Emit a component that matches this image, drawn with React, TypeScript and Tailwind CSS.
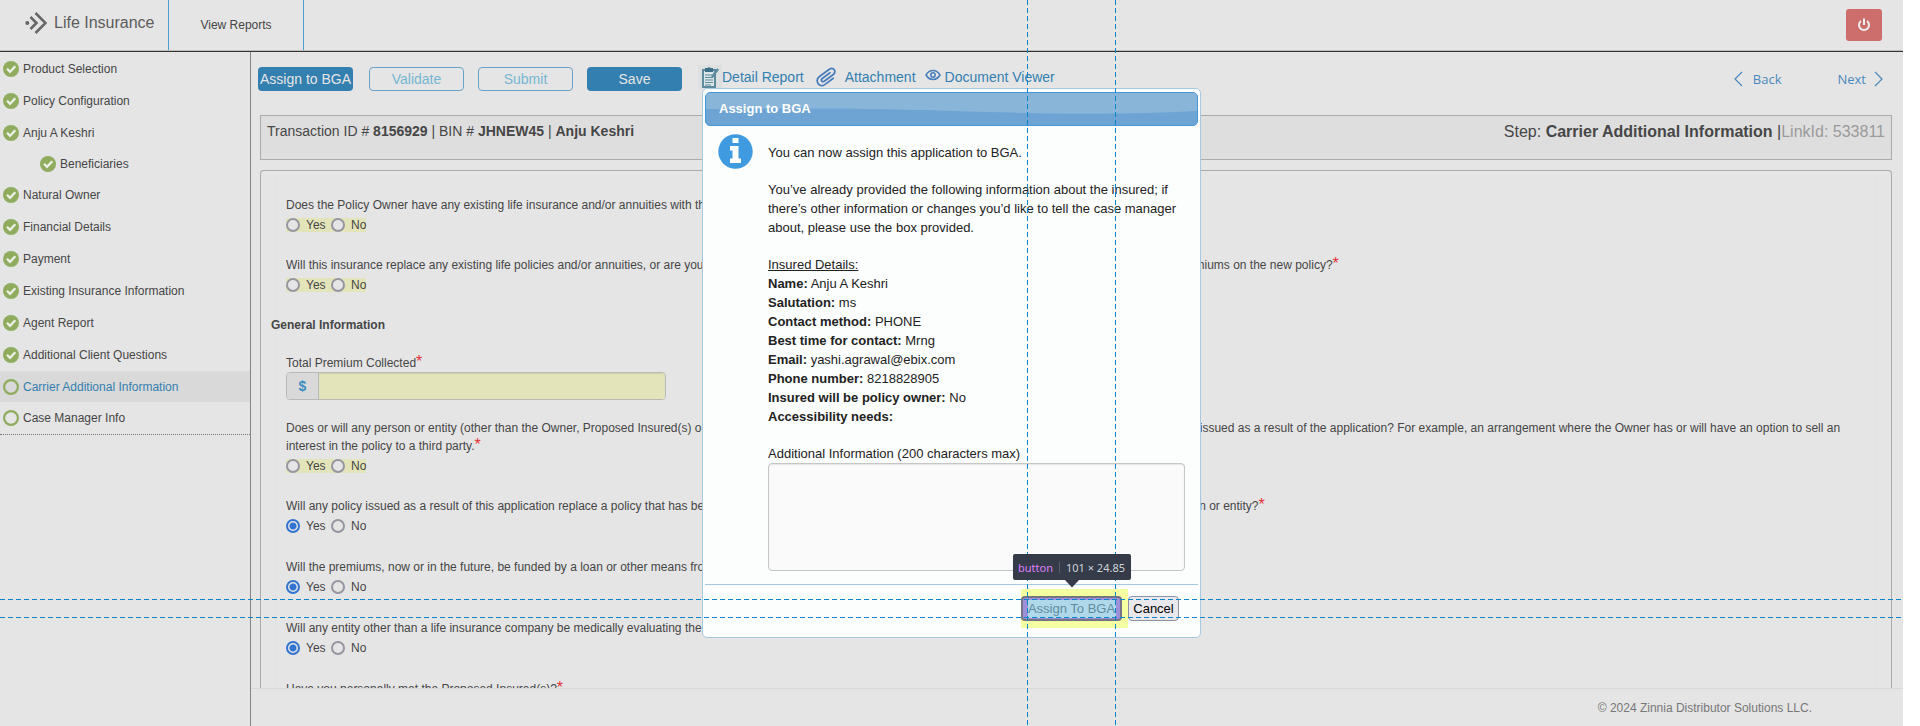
import React from "react";

type Answer = "Yes" | "No" | null;

const steps: { label: string; done: boolean; child?: boolean; active?: boolean }[] = [
  { label: "Product Selection", done: true },
  { label: "Policy Configuration", done: true },
  { label: "Anju A Keshri", done: true },
  { label: "Beneficiaries", done: true, child: true },
  { label: "Natural Owner", done: true },
  { label: "Financial Details", done: true },
  { label: "Payment", done: true },
  { label: "Existing Insurance Information", done: true },
  { label: "Agent Report", done: true },
  { label: "Additional Client Questions", done: true },
  { label: "Carrier Additional Information", done: false, active: true },
  { label: "Case Manager Info", done: false },
];

function StepIcon({ done }: { done: boolean }) {
  return (
    <svg className="size-4 shrink-0" viewBox="0 0 16 16" fill="none" aria-hidden="true">
      {done ? (
        <>
          <circle cx="8" cy="8" r="8" fill="#8fac5f" />
          <path d="M4 7.8 7 10.8 12.3 5.3" stroke="#eef1e8" strokeWidth="2.3" />
        </>
      ) : (
        <circle cx="8" cy="8" r="6.9" stroke="#8fac5f" strokeWidth="2.2" />
      )}
    </svg>
  );
}

function Required() {
  return <span className="text-base leading-none text-[#e53238]">*</span>;
}

function Question({ id, text, answer }: { id: string; text: string; answer: Answer }) {
  return (
    <fieldset className={answer ? "mb-[21px]" : "mb-5"}>
      <legend className="leading-[18px]">
        {text}
        <Required />
      </legend>
      <div className="flex h-[22px] items-center">
        <div className={answer ? "flex h-[14px] items-center" : "flex h-[14px] items-center bg-[#e3e4b9]"}>
          <Choice name={id} value="Yes" checked={answer === "Yes"} />
          <Choice name={id} value="No" checked={answer === "No"} />
        </div>
      </div>
    </fieldset>
  );
}

function Choice({ name, value, checked }: { name: string; value: string; checked: boolean }) {
  return (
    <label className={value === "Yes" ? "flex w-[45px] items-center gap-[6px]" : "flex items-center gap-[6px]"}>
      <input
        type="radio"
        name={name}
        value={value}
        defaultChecked={checked}
        className="size-[14px] shrink-0 appearance-none rounded-full border-2 border-[#9795a0] bg-[#e5e5e5] checked:border-[#3275d0] checked:bg-[radial-gradient(circle,#3275d0_3px,#e5e5e5_4px)]"
      />
      {value}
    </label>
  );
}

const details: [string, string][] = [
  ["Name:", "Anju A Keshri"],
  ["Salutation:", "ms"],
  ["Contact method:", "PHONE"],
  ["Best time for contact:", "Mrng"],
  ["Email:", "yashi.agrawal@ebix.com"],
  ["Phone number:", "8218828905"],
  ["Insured will be policy owner:", "No"],
  ["Accessibility needs:", ""],
];

function Dialog() {
  return (
    <section
      role="dialog"
      aria-labelledby="dialog-title"
      className="absolute left-[702px] top-[88px] w-[499px] rounded-[5px] border border-[#a6c9e2] bg-[#fcfdfd] p-[2px] pt-[3px] text-[13px] leading-[19px] text-[#222]"
    >
      <header className="relative overflow-hidden rounded-[5px] border border-[#4297d7] bg-[#6da4d3]">
        <svg className="absolute inset-0 size-full" viewBox="0 0 476 32" preserveAspectRatio="none" aria-hidden="true">
          <path d="M0 16C110 15 170 16 240 18S390 23 476 18V0H0Z" fill="#89b5d9" />
        </svg>
        <h2 id="dialog-title" className="relative px-[13px] text-[13px] font-bold leading-8 text-white">
          Assign to BGA
        </h2>
      </header>
      <div className="flex px-[13px] pt-2">
        <svg className="mr-[15px] size-[35px] shrink-0" viewBox="0 0 35 35" aria-hidden="true">
          <circle cx="17.5" cy="17.5" r="17.2" fill="#3f9adf" />
          <path d="M14.5 4h6v5h-6zM12 12h8.5v12.5H23V29H12v-4.500h2.500V16.500H12z" fill="#fff" />
        </svg>
        <div className="min-w-0 flex-1 pt-[9px]">
          <p>You can now assign this application to BGA.</p>
          <p className="mt-[18px]">
            You’ve already provided the following information about the insured; if there’s other information or
            changes you’d like to tell the case manager about, please use the box provided.
          </p>
          <p className="mt-[19px] leading-[18px] underline">Insured Details:</p>
          {details.map(([k, v]) => (
            <p key={k}>
              <b>{k}</b> {v}
            </p>
          ))}
          <label htmlFor="extra" className="mt-[18px] block">
            Additional Information (200 characters max)
          </label>
          <textarea
            id="extra"
            maxLength={200}
            className="block h-[108px] w-full resize-none rounded-[4px] border border-[#c6c6c6] bg-[#fafafa] p-2 shadow-[inset_0_1px_1px_rgba(0,0,0,0.08)]"
          />
        </div>
      </div>
      <footer className="mt-[13px] flex justify-end border-t border-[#a6c9e2] pb-[14px] pr-[19px] pt-[11px] leading-none">
        <div className="relative mr-[6px] flex">
          <div className="absolute -bottom-[7px] -top-[7px] -right-[6px] left-0 bg-[#f3ffa0]" />
          <button
            type="button"
            className="relative flex h-[25px] w-[101px] items-center justify-center whitespace-nowrap rounded-[4px] border-2 border-[#777483] bg-[#9d8fd8] text-[#5e8ca0]"
          >
            <span className="flex h-[18px] w-[88px] items-center justify-center bg-[#afd8ea]">Assign To BGA</span>
          </button>
          <div className="absolute bottom-[41px] left-1/2 z-10 flex h-[26px] w-[118px] -translate-x-1/2 items-center justify-center whitespace-nowrap rounded-[2px] bg-[#353b48] font-['Noto_Sans',sans-serif] text-[11px] text-[#ced3d9]">
            <span className="mr-[6px] border-r border-[#585d68] pr-[6px] text-[#df80ff]">button</span>101 × 24.85
            <svg className="absolute left-1/2 top-[26px] h-2 w-4 -translate-x-1/2" viewBox="0 0 16 8" aria-hidden="true">
              <path d="M1 0h14L8 7.500Z" fill="#353b48" />
            </svg>
          </div>
        </div>
        <button type="button" className="h-[25px] w-[51px] rounded-[4px] border border-[#8f8f9d] bg-[#e9e9ed] text-center text-black">
          Cancel
        </button>
      </footer>
    </section>
  );
}

const hGuide = "pointer-events-none absolute left-0 h-px w-full bg-[repeating-linear-gradient(90deg,#0b85ca_0_5px,transparent_5px_8px)]";
const vGuide = "pointer-events-none absolute top-0 w-px h-full bg-[repeating-linear-gradient(180deg,#0b85ca_0_5px,transparent_5px_8px)]";

export default function App() {
  return (
    <div className="min-h-screen bg-white pr-[17px] font-['Liberation_Sans',Arial,sans-serif] text-xs text-[#464646]">
      <div className="relative flex h-screen flex-col overflow-hidden bg-[#e5e5e5]">
        <header className="flex h-[52px] shrink-0 border-b border-[#333] shadow-[inset_0_-1px_#bdbdbd]">
          <div className="flex h-[50px] w-[169px] items-center border-r border-[#4c9fd0] pb-1 pl-[25px]">
            <svg className="mr-[7px] h-[22px] w-[22px]" viewBox="0 0 22 22" fill="none" stroke="#666" strokeWidth="2.500" aria-hidden="true">
              <circle cx="2.300" cy="11" r="2" fill="#666" stroke="none" />
              <path d="M5.500 5 11.500 11 5.500 17M10.500 1 20.500 11 10.500 21" />
            </svg>
            <span className="text-base text-[#5c5c5c]">Life Insurance</span>
          </div>
          <a href="#reports" className="flex h-[50px] w-[135px] items-center justify-center border-r border-[#4c9fd0]">
            View Reports
          </a>
          <button type="button" aria-label="Log out" className="ml-auto mr-[21px] mt-[9px] flex h-8 w-9 items-center justify-center rounded-[3px] bg-[#ce6e6c]">
            <svg className="size-[14px]" viewBox="0 0 14 14" fill="none" stroke="#eee" strokeWidth="2" aria-hidden="true">
              <path d="M4 3a5 5 0 1 0 6 0M7 .5V7" />
            </svg>
          </button>
        </header>
        <div className="flex min-h-0 flex-1">
          <nav className="w-[251px] shrink-0 border-r border-[#848484] pt-px">
            <ul className="border-b border-dotted border-[#777]">
              {steps.map((s) => (
                <li key={s.label}>
                  <a
                    href="#step"
                    className={
                      s.active
                        ? "flex h-[31px] items-center gap-1 bg-[#d9d9d9] pl-[3px] text-[#337fb0]"
                        : s.child
                          ? "flex h-[30px] items-center gap-1 pl-10"
                          : "flex h-8 items-center gap-1 pl-[3px]"
                    }
                  >
                    <StepIcon done={s.done} />
                    {s.label}
                  </a>
                </li>
              ))}
            </ul>
          </nav>
          <div className="flex min-w-0 flex-1 flex-col">
            <main className="flex min-h-0 flex-1 flex-col overflow-hidden pl-[7px]">
              <div className="flex h-[63px] shrink-0 items-start pt-[15px] text-sm text-[#337fb0]">
                <button type="button" className="mr-4 h-6 w-[95px] whitespace-nowrap rounded-[4px] bg-[#337fb0] text-center text-[#e5e5e5]">Assign to BGA</button>
                <button type="button" className="mr-[14px] h-6 w-[95px] rounded-[4px] border border-[#6aa3c8] text-[#76b6d2]">Validate</button>
                <button type="button" className="mr-[14px] h-6 w-[95px] rounded-[4px] border border-[#6aa3c8] text-[#76b6d2]">Submit</button>
                <button type="button" className="mr-4 h-6 w-[95px] rounded-[4px] bg-[#337fb0] text-[#e5e5e5]">Save</button>
                <a href="#report" className="mr-3 flex h-5 items-center">
                  <svg className="h-6 w-6 bg-[#dce0e0]" viewBox="0 0 24 24" aria-hidden="true">
                    <path d="M4 4H18V23H4Z" fill="#5d8a9d" />
                    <path d="M6 6H16V21H6Z" fill="#dce5e8" />
                    <path d="M7 3h2.500a1.800 1.800 0 0 1 3 0H15v4H7Z" fill="#3e7187" />
                    <path d="M7 10h7M7 12.500h8M7 15h8M7 17.500h8M7 20h6" stroke="#5d8a9d" />
                    <path d="M20 4 14 12" stroke="#5d8a9d" strokeWidth="2.500" />
                  </svg>
                  Detail Report
                </a>
                <a href="#attachment" className="mr-[9px] flex h-5 items-center gap-[9px]">
                  <svg className="size-5" viewBox="0 0 20 20" fill="none" stroke="#477cba" strokeWidth="1.700" strokeLinecap="round" aria-hidden="true">
                    <path d="M14 5.800 6.300 11.500C4.300 13 6 15.800 8.200 14.300L17 7.800C21 4.500 17.500-.5 13.300 2.200L3.800 9.300C-1.800 13.500 3 21.500 8.800 17.600L17.300 11.300" />
                  </svg>
                  Attachment
                </a>
                <a href="#viewer" className="flex h-5 items-center gap-1">
                  <svg className="-mt-1 h-3 w-4" viewBox="0 0 16 12" fill="none" stroke="#477cba" strokeWidth="1.500" aria-hidden="true">
                    <path d="M1 6C4.500 0 11.500 0 15 6 11.500 12 4.500 12 1 6Z" />
                    <circle cx="8" cy="6" r="2.200" />
                  </svg>
                  Document Viewer
                </a>
                <nav className="ml-auto mr-[20px] flex h-6 items-center font-['Open_Sans','Noto_Sans',sans-serif] text-[13px] text-[#4a88c0]">
                  <a href="#back" className="flex items-center gap-[10px]">
                    <svg className="h-4 w-[9px]" viewBox="0 0 9 16" fill="none" stroke="#4a88c0" strokeWidth="1.200" aria-hidden="true"><path d="M8 1 1 8l7 7" /></svg>
                    Back
                  </a>
                  <a href="#next" className="ml-14 flex items-center gap-2">
                    Next
                    <svg className="h-4 w-[9px]" viewBox="0 0 9 16" fill="none" stroke="#4a88c0" strokeWidth="1.200" aria-hidden="true"><path d="m1 1 7 7-7 7" /></svg>
                  </a>
                </nav>
              </div>
              <div className="ml-[2px] mr-[11px] flex h-[45px] shrink-0 justify-between border border-[#ababab] bg-[#dedede] px-[6px] pt-[5px] leading-5">
                <p className="text-sm leading-5">
                  Transaction ID # <b>8156929</b> | BIN # <b>JHNEW45</b> | <b>Anju Keshri</b>
                </p>
                <p className="pt-px text-base leading-5">
                  Step: <b>Carrier Additional Information </b>|<span className="text-[#9b9b9b]">LinkId: 533811</span>
                </p>
              </div>
              <div className="ml-[2px] mr-[11px] mt-[10px] flex min-h-0 flex-1 overflow-hidden rounded-t-[4px] border border-b-0 border-[#ababab] px-[14px] pt-2">
                <form className="min-w-0 flex-1 border-x border-[#e1e1e1] pl-[10px] pr-5 pt-[17px]">
                  <Question id="q1" text="Does the Policy Owner have any existing life insurance and/or annuities with this or any other company?" answer={null} />
                  <Question id="q2" text="Will this insurance replace any existing life policies and/or annuities, or are you considering using funds from other existing life insurance policies or annuities to pay the premiums on the new policy?" answer={null} />
                  <h3 className="-ml-[15px] mb-[20px] font-bold leading-[18px]">General Information</h3>
                  <div className="mb-[19px]">
                    <label htmlFor="premium" className="block leading-[18px]">Total Premium Collected<Required /></label>
                    <div className="flex h-7 w-[380px] overflow-hidden rounded-[4px] border border-[#b9b9b9]">
                      <span className="flex w-8 items-center justify-center border-r border-[#b9b9b9] bg-[#d9d9d9] text-sm font-bold text-[#3a8fc0]">$</span>
                      <input id="premium" className="min-w-0 flex-1 bg-[#e3e4b9] px-2 shadow-[inset_0_1px_1px_rgba(0,0,0,0.08)]" />
                    </div>
                  </div>
                  <Question id="q3" text="Does or will any person or entity (other than the Owner, Proposed Insured(s) or any family member) have any legal or beneficial right, title or other interests in any life policy issued as a result of the application? For example, an arrangement where the Owner has or will have an option to sell an interest in the policy to a third party." answer={null} />
                  <Question id="q4" text="Will any policy issued as a result of this application replace a policy that has been previously sold, assigned or otherwise transferred by any previous owner to another person or entity?" answer="Yes" />
                  <Question id="q5" text="Will the premiums, now or in the future, be funded by a loan or other means from a lender?" answer="Yes" />
                  <Question id="q6" text="Will any entity other than a life insurance company be medically evaluating the insured?" answer="Yes" />
                  <Question id="q7" text="Have you personally met the Proposed Insured(s)?" answer="Yes" />
                </form>
              </div>
            </main>
            <footer className="flex h-[38px] shrink-0 items-center justify-end border-t border-[#d8d8d8] pr-[91px] text-[#777]">
              © 2024 Zinnia Distributor Solutions LLC.
            </footer>
          </div>
        </div>
        <Dialog />
        <div className={`${hGuide} top-[599px]`} />
        <div className={`${hGuide} top-[617px]`} />
        <div className={`${vGuide} left-[1027px]`} />
        <div className={`${vGuide} left-[1115px]`} />
      </div>
    </div>
  );
}
